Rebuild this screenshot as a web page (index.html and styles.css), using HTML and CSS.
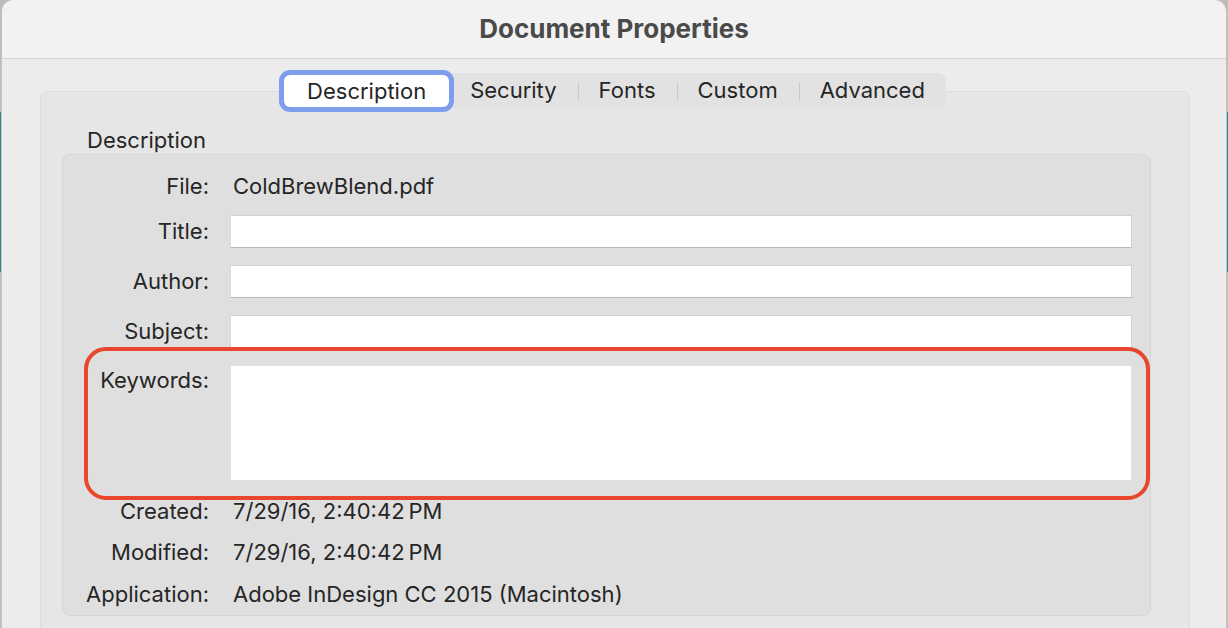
FILE: index.html
```html
<!DOCTYPE html>
<html lang="en">
<head>
  <meta charset="UTF-8">
  <title>Document Properties</title>
  <link rel="stylesheet" href="styles.css">
</head>
<body>
  <div class="window">
    <header class="titlebar">Document Properties</header>

    <div class="content">
      <!-- Tabs -->
      <div class="tabs">
        <div class="tab selected">Description</div>
        <div class="tab">Security</div>
        <div class="tab sep">Fonts</div>
        <div class="tab sep">Custom</div>
        <div class="tab sep">Advanced</div>
      </div>

      <div class="group">
        <div class="group-title">Description</div>

        <div class="panel">
          <div class="row row-file">
            <div class="label">File:</div>
            <div class="value">ColdBrewBlend.pdf</div>
          </div>
          <div class="row row-field">
            <div class="label">Title:</div>
            <div class="field"></div>
          </div>
          <div class="row row-field">
            <div class="label">Author:</div>
            <div class="field"></div>
          </div>
          <div class="row row-field">
            <div class="label">Subject:</div>
            <div class="field"></div>
          </div>
          <div class="row row-keywords">
            <div class="label">Keywords:</div>
            <div class="field field-tall"></div>
          </div>
          <div class="row row-created">
            <div class="label">Created:</div>
            <div class="value">7/29/16, 2:40:42&#8239;PM</div>
          </div>
          <div class="row row-modified">
            <div class="label">Modified:</div>
            <div class="value">7/29/16, 2:40:42&#8239;PM</div>
          </div>
          <div class="row row-app">
            <div class="label">Application:</div>
            <div class="value">Adobe InDesign CC 2015 (Macintosh)</div>
          </div>

          <!-- highlight annotation -->
          <div class="highlight"></div>
        </div>
      </div>
    </div>
  </div>
</body>
</html>
```

FILE: styles.css
```css
html, body {
  margin: 0;
  padding: 0;
  height: 100%;
  overflow: hidden;
}

body {
  font-family: Inter, "Liberation Sans", sans-serif;
  color: #262626;
  background:
    linear-gradient(to bottom, transparent 0, transparent 112px, #2f8a8e 112px, #2f8a8e 272px, transparent 272px),
    #bcbcbc;
}

.window {
  margin-left: 2px;
  width: 1224px;
  height: 628px;
  overflow: hidden;
  background: #ececec;
  border-radius: 12px 12px 0 0;
  box-shadow: 0 0 0 1px #c4c4c4;
}

.titlebar {
  height: 58px;
  line-height: 58px;
  background: #f2f2f2;
  border-bottom: 1px solid #d2d2d2;
  border-radius: 12px 12px 0 0;
  text-align: center;
  font-size: 26px;
  font-weight: 700;
  color: #4a4a4a;
}

.content {
  padding: 14px 36px 0 38px;
}

.tabs {
  display: flex;
  width: fit-content;
  margin: 0 auto -17px;
  height: 35px;
  background: #e2e2e2;
  border-radius: 8px;
  position: relative;
  z-index: 1;
  font-size: 22px;
}

.tab {
  padding: 0 21px;
  line-height: 35px;
  position: relative;
}

.tab.sep::before {
  content: "";
  position: absolute;
  left: 0;
  top: 9px;
  height: 18px;
  border-left: 1px solid #c8c8c8;
}

.tab.selected {
  background: #fff;
  border-radius: 6px;
  margin: 2px 0 1px;
  line-height: 32px;
  padding: 0 23px;
  box-shadow: 0 0 0 5px #7d9ded;
}

.group {
  background: #e6e6e6;
  border: 1px solid #dcdcdc;
  border-radius: 7px;
  height: 600px;
  padding: 33px 38px 0 21px;
}

.group-title {
  font-size: 22px;
  line-height: 30px;
  padding-left: 25px;
  margin-bottom: -1px;
}

.panel {
  position: relative;
  background: #dfdfdf;
  border: 1px solid #d6d6d6;
  border-radius: 8px;
  padding: 15px 18px 5px 0;
  font-size: 22px;
}

.row {
  display: flex;
  gap: 21px;
}

.label {
  width: 146px;
  flex: none;
  text-align: right;
}

.value {
  padding-left: 3px;
}

.row-file {
  height: 32px;
  line-height: 32px;
}

.row-field {
  height: 33px;
  line-height: 33px;
  margin-top: 17px;
}

.row-file + .row-field {
  margin-top: 13px;
}

.row-keywords {
  height: 116px;
  line-height: 30px;
  margin-top: 17px;
}

.field {
  flex: 1;
  background: #fff;
  border-top: 1px solid #d2d2d2;
  border-left: 1px solid #dadada;
  border-right: 1px solid #d0d0d0;
  border-bottom: 1px solid #b8b8b8;
}

.field-tall {
  border: 1px solid #e2e2e2;
}

.row-created {
  height: 32px;
  line-height: 32px;
  margin-top: 14px;
}

.row-modified {
  height: 32px;
  line-height: 32px;
  margin-top: 9px;
}

.row-app {
  height: 32px;
  line-height: 32px;
  margin-top: 10px;
}

.highlight {
  position: absolute;
  left: 21px;
  top: 192px;
  width: 1058px;
  height: 145px;
  border: 4.5px solid #e8462d;
  border-radius: 22px;
  pointer-events: none;
}
```
